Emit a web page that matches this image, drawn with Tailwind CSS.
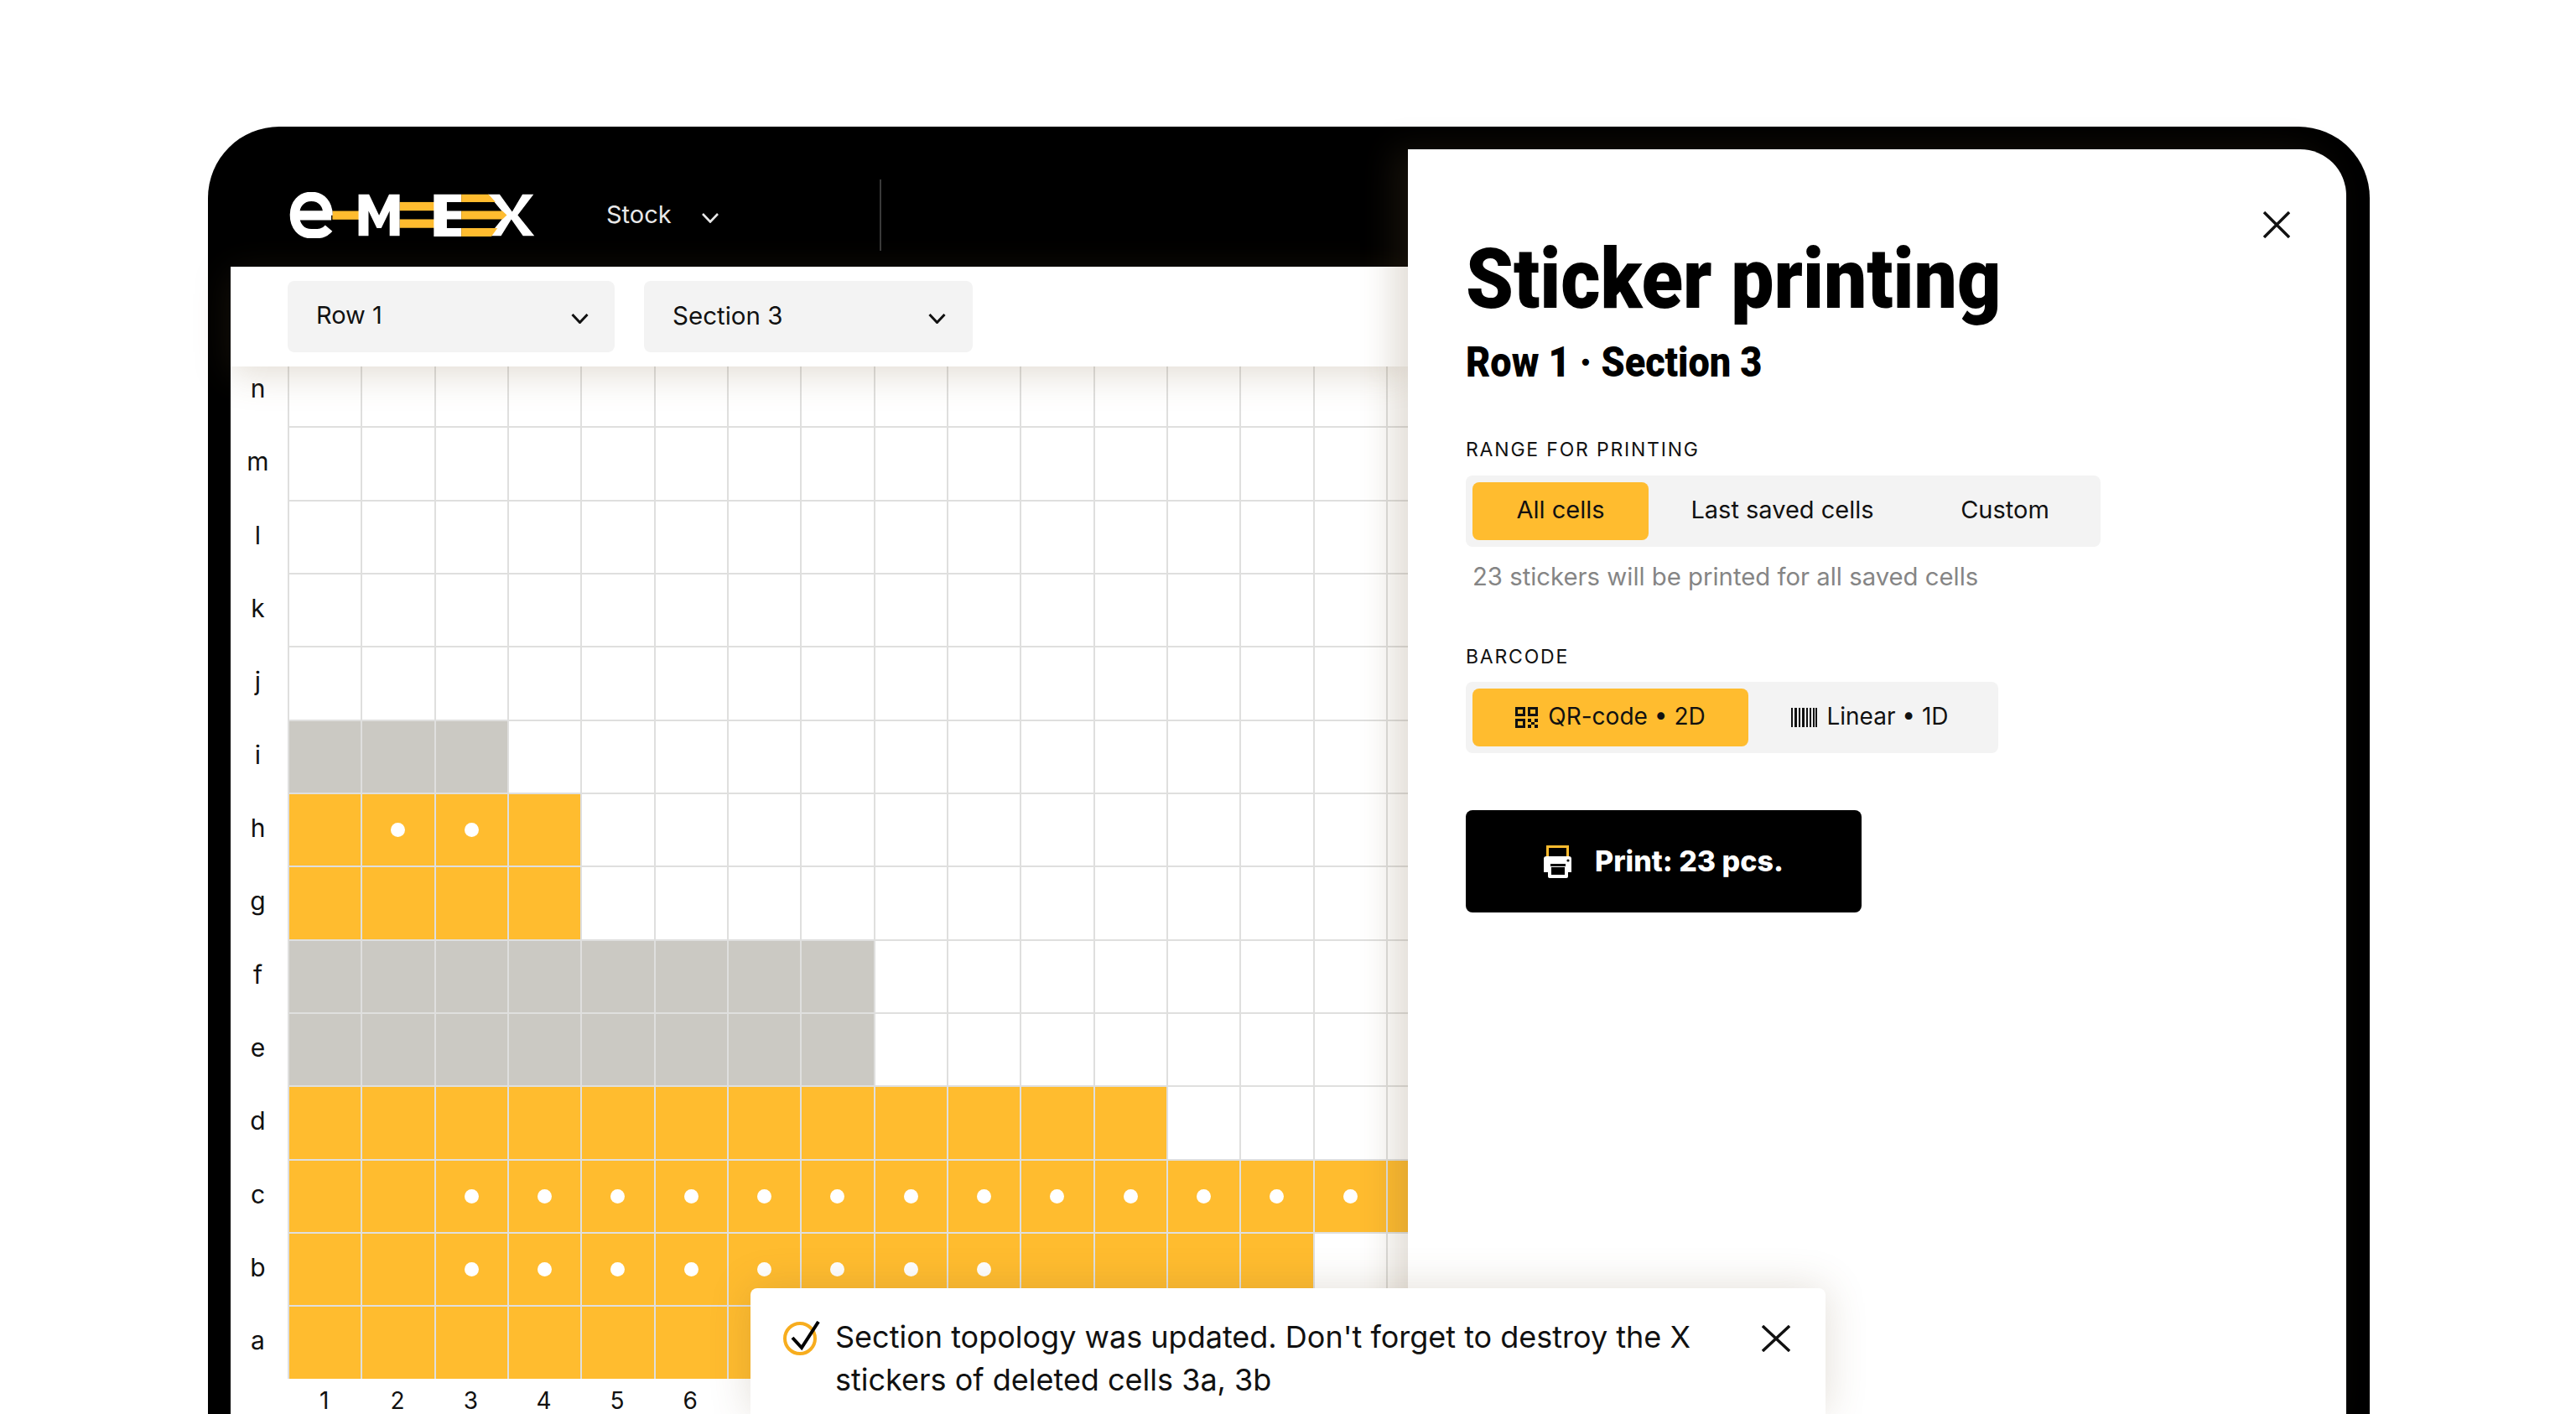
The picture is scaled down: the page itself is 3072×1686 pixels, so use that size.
<!DOCTYPE html>
<html>
<head>
<meta charset="utf-8">
<script src="https://cdn.jsdelivr.net/npm/@tailwindcss/browser@4"></script>
</head>
<body class="bg-white font-['Inter',sans-serif] text-[#111]">
<div class="relative w-[3072px] h-[1686px] overflow-hidden bg-white pt-[151px] pl-[248px]">
  <div class="flex w-[2578px] h-[1535px] bg-black rounded-t-[85px] px-[27px]">
    <!-- left app -->
    <div class="w-[1404px] h-full flex flex-col">
      <header class="h-[167px] shrink-0 flex items-center pl-[70px] pt-[45px]">
        <svg class="w-[293px] h-[55px] shrink-0 mt-[-1px]" viewBox="75 92 880 166">
          <rect x="228" y="160" width="96" height="31" fill="#FFBC2F"/>
          <rect x="470" y="128" width="125" height="31" fill="#FFBC2F"/>
          <rect x="470" y="190" width="125" height="31" fill="#FFBC2F"/>
          <path d="M224 176 H92 M215 222 C196 244 176 242 152 242 C116 242 92 214 92 175 C92 136 116 108 152 108 C190 108 212 136 212 176" fill="none" stroke="#fff" stroke-width="34"/>
          <path d="M322 250 V100 H360 L396 176 L432 100 H470 V250 H434 V160 L404 222 H388 L358 160 V250 Z" fill="#fff"/>
          <path d="M788 100 H830 L875 163 L912 100 H952 L895 175 L955 250 H914 L872 190 L835 250 H790 L850 175 Z" fill="#fff"/>
          <path d="M593 100 H692 V128 H640 V160 H692 V190 H640 V222 H692 V252 H593 Z" fill="#fff"/>
          <path d="M692 100 H790 L815 128 H692 Z M692 160 H840 L856 175 L840 190 H692 Z M692 222 H822 L800 252 H692 Z" fill="#FFBC2F"/>
        </svg>
        <span class="ml-[85px] mt-[-3px] w-[80px] text-[29px] leading-[40px] text-[#e8e8e8] whitespace-nowrap">Stock</span>
        <svg class="ml-[34px] mt-[5px] w-[20px] h-[12px]" viewBox="0 0 20 12" fill="none" stroke="#e8e8e8" stroke-width="2.6"><path d="M1 1 L10 10.5 L19 1"/></svg>
        <div class="ml-[192px] mt-[-1px] w-[2px] h-[85px] bg-[#3a3a3a]"></div>
      </header>
      <div class="relative z-10 h-[119px] shrink-0 bg-white flex items-start pt-[17px] pl-[68px] gap-[35px] shadow-[0_8px_45px_rgba(120,90,50,0.22)]">
        <div class="w-[390px] h-[85px] bg-[#f3f3f3] rounded-[8px] flex items-center justify-between pl-[34px] pr-[31px]">
          <span class="text-[29px] mt-[-3px]">Row 1</span>
          <svg class="w-[21px] h-[12px] mt-[5px]" viewBox="0 0 20 12" fill="none" stroke="#111" stroke-width="3"><path d="M1 1 L10 10.5 L19 1"/></svg>
        </div>
        <div class="w-[392px] h-[85px] bg-[#f3f3f3] rounded-[8px] flex items-center justify-between pl-[34px] pr-[32px]">
          <span class="text-[29.5px] mt-[-3px]">Section 3</span>
          <svg class="w-[21px] h-[12px] mt-[5px]" viewBox="0 0 20 12" fill="none" stroke="#111" stroke-width="3"><path d="M1 1 L10 10.5 L19 1"/></svg>
        </div>
      </div>
      <div class="flex-1 bg-white overflow-hidden">
        <div id="grid" class="mt-[-16px] w-[1500px]"></div>
        <div class="flex pl-[68px] pt-[6px]">
          <span class="w-[87.33px] text-center text-[28px] leading-[40px]">1</span>
          <span class="w-[87.33px] text-center text-[28px] leading-[40px]">2</span>
          <span class="w-[87.33px] text-center text-[28px] leading-[40px]">3</span>
          <span class="w-[87.33px] text-center text-[28px] leading-[40px]">4</span>
          <span class="w-[87.33px] text-center text-[28px] leading-[40px]">5</span>
          <span class="w-[87.33px] text-center text-[28px] leading-[40px]">6</span>
        </div>
      </div>
    </div>
    <!-- panel -->
    <aside class="relative z-20 w-[1119px] mt-[27px] h-[1508px] bg-white rounded-tr-[55px] pl-[69px] pt-[100px] shadow-[-18px_0_40px_rgba(110,85,50,0.2)]">
      <svg class="absolute left-[1020px] top-[74px] w-[32px] h-[32px]" viewBox="0 0 32 32" fill="none" stroke="#111" stroke-width="3.4"><path d="M1 1 L31 31 M31 1 L1 31"/></svg>
      <h1 class="w-fit origin-left scale-x-[0.91] whitespace-nowrap font-['Roboto',sans-serif] text-[100px] leading-[110px] font-black text-black">Sticker printing</h1>
      <h2 class="w-fit origin-left scale-x-[0.9] whitespace-nowrap mt-[14px] font-['Roboto',sans-serif] text-[50px] leading-[60px] font-black text-black">Row 1 · Section 3</h2>
      <div class="mt-[59px] text-[23px] leading-[30px] tracking-[1.8px]">RANGE FOR PRINTING</div>
      <div class="mt-[16px] flex w-[757px] h-[85px] p-[8px] bg-[#f3f3f3] rounded-[8px] text-[29px]">
        <div class="w-[210px] flex items-center justify-center bg-[#FFBC2F] rounded-[8px]"><span class="mt-[-4px]">All cells</span></div>
        <div class="w-[319px] flex items-center justify-center"><span class="mt-[-4px]">Last saved cells</span></div>
        <div class="w-[212px] flex items-center justify-center"><span class="mt-[-4px]">Custom</span></div>
      </div>
      <div class="mt-[16px] ml-[8px] text-[29.3px] leading-[40px] text-[#858585]">23 stickers will be printed for all saved cells</div>
      <div class="mt-[60px] text-[23px] leading-[30px] tracking-[1.8px]">BARCODE</div>
      <div class="mt-[15px] flex w-fit h-[85px] p-[8px] bg-[#f3f3f3] rounded-[8px] text-[28px]">
        <div class="w-[329px] flex items-center justify-center gap-[12px] bg-[#FFBC2F] rounded-[8px]">
          <svg class="w-[27px] h-[25px]" viewBox="0 0 27 25" fill="#111"><path fill-rule="evenodd" d="M0 0H12V11H0Z M3 3V8H9V3Z M15 0H27V11H15Z M18 3V8H24V3Z M0 14H12V25H0Z M3 17V22H9V17Z"/><rect x="15" y="14" width="4" height="4"/><rect x="23" y="14" width="4" height="4"/><rect x="19" y="18" width="4" height="3"/><rect x="15" y="21" width="4" height="4"/><rect x="23" y="21" width="4" height="4"/></svg>
          <span class="mt-[-3px]">QR-code • 2D</span>
        </div>
        <div class="w-[290px] flex items-center justify-center gap-[11px]">
          <svg class="w-[31px] h-[23px]" viewBox="0 0 31 23" fill="#111"><rect x="0" width="2" height="23"/><rect x="4" width="3" height="23"/><rect x="9" width="2" height="23"/><rect x="13" width="3" height="23"/><rect x="18" width="2" height="23"/><rect x="22" width="2" height="23"/><rect x="26" width="2" height="23"/><rect x="29" width="2" height="23"/></svg>
          <span class="mt-[-3px]">Linear • 1D</span>
        </div>
      </div>
      <button class="mt-[68px] w-[472px] h-[122px] bg-black rounded-[8px] flex items-center justify-center gap-[28px] text-white text-[34px] font-extrabold">
        <svg class="w-[33px] h-[39px]" viewBox="0 0 33 39"><rect x="4.5" y="1.5" width="24" height="18" fill="none" stroke="#FFBC2F" stroke-width="3"/><path d="M3 13H30Q33 13 33 16V32H0V16Q0 13 3 13Z" fill="#fff"/><rect x="5" y="22" width="24" height="17" rx="2" fill="#fff"/><rect x="9" y="26" width="16" height="9" fill="#000"/><rect x="8" y="22" width="18" height="3" fill="#000"/><circle cx="29" cy="18" r="1.6" fill="#000"/></svg>
        <span class="mt-[-2px]">Print: 23 pcs.</span>
      </button>
    </aside>
  </div>
  <!-- toast -->
  <div class="absolute z-30 left-[895px] top-[1536px] w-[1282px] h-[150px] bg-white rounded-t-[8px] shadow-[0_0_50px_rgba(110,85,50,0.2)] flex items-start pl-[39px] pt-[33px]">
    <svg class="w-[44px] h-[41px] mt-[6px] shrink-0" viewBox="0 0 44 41" fill="none"><circle cx="20" cy="21" r="18" stroke="#F7AD1E" stroke-width="4"/><path d="M11 20 L22 32 L42 1" stroke="#000" stroke-width="4"/></svg>
    <p class="ml-[18px] w-[1060px] text-[36px] leading-[51px] text-[#111]">Section topology was updated. Don't forget to destroy the X stickers of deleted cells 3a, 3b</p>
    <svg class="absolute left-[1206px] top-[44px] w-[34px] h-[32px]" viewBox="0 0 34 32" fill="none" stroke="#111" stroke-width="3.4"><path d="M1 1 L33 31 M33 1 L1 31"/></svg>
  </div>
</div>
<script>
  var labels = "nmlkjihgfedcba".split("");
  var spec = {
    i:["g",3,[]], h:["y",4,[2,3]], g:["y",4,[]], f:["g",8,[]], e:["g",8,[]],
    d:["y",12,[]], c:["y",16,[3,4,5,6,7,8,9,10,11,12,13,14,15]], b:["y",14,[3,4,5,6,7,8,9,10]], a:["y",14,[]]
  };
  var html = "";
  labels.forEach(function (l) {
    var s = spec[l] || ["",0,[]];
    html += '<div class="flex h-[87.33px]"><div class="w-[68px] shrink-0 flex items-center justify-center pr-[3px] pb-[2px] text-[30px] text-[#111]">' + l + '</div>';
    for (var c = 1; c <= 16; c++) {
      var fill = "bg-white";
      if (c <= s[1]) fill = s[0] === "y" ? "bg-[#FFBC2F]" : "bg-[#CBC9C3]";
      var dot = s[2].indexOf(c) >= 0 ? '<span class="w-[17px] h-[17px] rounded-full bg-white"></span>' : "";
      html += '<div class="w-[87.33px] shrink-0 flex items-center justify-center border-l-2 border-t-2 border-[#dfdfde] ' + fill + '">' + dot + '</div>';
    }
    html += "</div>";
  });
  document.getElementById("grid").innerHTML = html;
</script>
</body>
</html>
